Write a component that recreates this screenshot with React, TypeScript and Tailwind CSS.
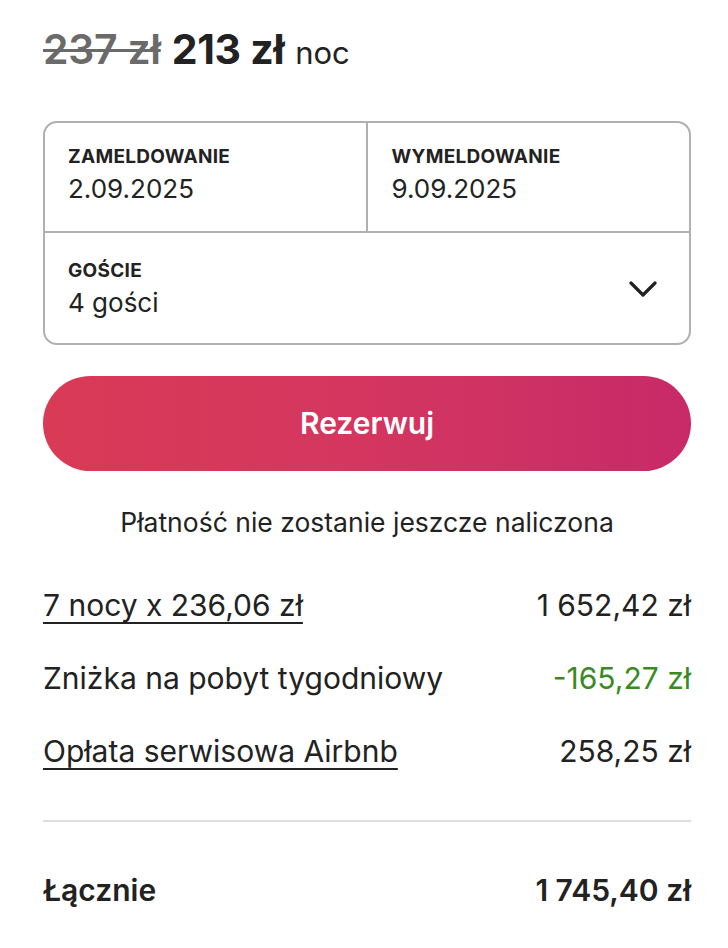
const ROWS = [
  { label: "7 nocy x 236,06 zł", value: "1 652,42 zł", link: true },
  { label: "Zniżka na pobyt tygodniowy", value: "-165,27 zł", green: true },
  { label: "Opłata serwisowa Airbnb", value: "258,25 zł", link: true },
];

export default function App() {
  return (
    <div className="min-h-[948px] bg-white font-['Inter',sans-serif] text-[#222222]">
      <div className="ml-[43px] w-[648px] pt-[19px]">
        {/* price */}
        <div className="flex h-[55px] items-baseline gap-[11px]">
          <span className="text-[41px] font-semibold text-[#6a6a6a] line-through decoration-[3px] tracking-[-0.3px]">237 zł</span>
          <span className="text-[41px] font-bold tracking-[-0.3px]">213 zł</span>
          <span className="text-[31px]">noc</span>
        </div>

        {/* dates + guests */}
        <div className="mt-[47px] rounded-[14px] border-2 border-[#b0b0b0]">
          <div className="flex h-[110px] border-b-2 border-[#b0b0b0]">
            <div className="flex-1 border-r-2 border-[#b0b0b0] pl-[23px] pt-[22px]">
              <div className="text-[19px] font-bold leading-[24px] tracking-[0.3px]">ZAMELDOWANIE</div>
              <div className="mt-[4px] text-[26px] leading-[32px]">2.09.2025</div>
            </div>
            <div className="flex-1 pl-[24px] pt-[22px]">
              <div className="text-[19px] font-bold leading-[24px] tracking-[0.3px]">WYMELDOWANIE</div>
              <div className="mt-[4px] text-[26px] leading-[32px]">9.09.2025</div>
            </div>
          </div>
          <div className="flex h-[110px] items-center justify-between pl-[23px] pr-[32px]">
            <div className="pt-[1px]">
              <div className="text-[19px] font-bold leading-[24px] tracking-[0.3px]">GOŚCIE</div>
              <div className="mt-[4px] text-[26px] leading-[32px]">4 gości</div>
            </div>
            <svg width="28" height="16" viewBox="0 0 28 16" fill="none" className="mt-[2px]">
              <path d="M2 2l12 12L26 2" stroke="#222222" strokeWidth="3.2" strokeLinecap="round" strokeLinejoin="round" />
            </svg>
          </div>
        </div>

        {/* reserve */}
        <button className="mt-[31px] flex h-[95px] w-full items-center justify-center rounded-full bg-gradient-to-r from-[#d93a55] via-[#d43660] to-[#c72a67] text-[30px] font-semibold text-white">
          Rezerwuj
        </button>

        <p className="mt-[34px] text-center text-[26.5px] leading-[34px]">Płatność nie zostanie jeszcze naliczona</p>

        {/* breakdown */}
        <div className="mt-[49px] flex flex-col gap-[38px]">
          {ROWS.map((r) => (
            <div key={r.label} className="flex items-center justify-between text-[30px] leading-[35px]">
              <span className={r.link ? "underline decoration-[1.5px] underline-offset-[6px]" : ""}>{r.label}</span>
              <span className={r.green ? "text-[#3a8a24]" : ""}>{r.value}</span>
            </div>
          ))}
        </div>

        <div className="mt-[51px] h-[2px] bg-[#dddddd]" />

        <div className="mt-[51px] flex items-center justify-between text-[30px] font-semibold leading-[35px]">
          <span>Łącznie</span>
          <span>1 745,40 zł</span>
        </div>
      </div>
    </div>
  );
}
